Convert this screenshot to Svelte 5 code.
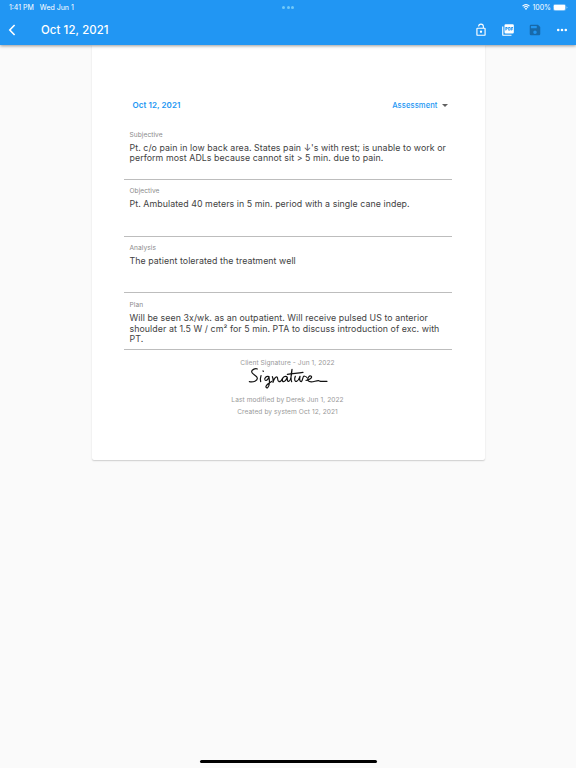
<script>
  const title = 'Oct 12, 2021';

  const fields = [
    {
      label: 'Subjective',
      lines: [
        "Pt. c/o pain in low back area. States pain ↓'s with rest; is unable to work or",
        'perform most ADLs because cannot sit > 5 min. due to pain.'
      ]
    },
    {
      label: 'Objective',
      lines: ['Pt. Ambulated 40 meters in 5 min. period with a single cane indep.']
    },
    {
      label: 'Analysis',
      lines: ['The patient tolerated the treatment well']
    },
    {
      label: 'Plan',
      lines: [
        'Will be seen 3x/wk. as an outpatient. Will receive pulsed US to anterior',
        'shoulder at 1.5 W / cm² for 5 min. PTA to discuss introduction of exc. with',
        'PT.'
      ]
    }
  ];
</script>

<div class="screen">
  <header class="app-bar">
    <div class="status">
      <span class="time">1:41 PM</span>
      <span>Wed Jun 1</span>
      <span class="multitask"><i></i><i></i><i></i></span>
      <svg class="wifi" width="8" height="6" viewBox="0 0 16 12" aria-hidden="true">
        <path d="M1 4.2Q8-1.8 15 4.2M3.6 7Q8 3.2 12.4 7" fill="none" stroke="currentColor" stroke-width="2.2" />
        <path d="M5.4 9Q8 6.8 10.6 9L8 12z" fill="currentColor" />
      </svg>
      <span class="percent">100%</span>
      <svg class="battery" width="15" height="7" viewBox="0 0 15 7" aria-hidden="true">
        <rect x=".25" y=".25" width="12.500" height="6.500" rx="1.9" fill="none" stroke="currentColor" stroke-width=".5" opacity=".5" />
        <rect x=".8" y=".8" width="11.4" height="5.4" rx="1.4" fill="currentColor" />
        <path d="M13.6 2.500v2q.9-.3.9-1t-.9-1z" fill="currentColor" opacity=".6" />
      </svg>
    </div>
    <div class="toolbar">
      <button class="back" aria-label="Back">
        <svg width="8" height="12" viewBox="0 0 8 12">
          <path d="M6.6 1 1.8 6l4.8 5" fill="none" stroke="currentColor" stroke-width="1.6" />
        </svg>
      </button>
      <h1>{title}</h1>
      <div class="actions">
        <button aria-label="Unlock">
          <svg width="14" height="14" viewBox="0 0 24 24" fill="currentColor">
            <path d="M12 17a2 2 0 1 0 0-4 2 2 0 0 0 0 4zm6-9h-1V6A5 5 0 0 0 7 6h1.9a3.1 3.1 0 0 1 6.2 0v2H6a2 2 0 0 0-2 2v10a2 2 0 0 0 2 2h12a2 2 0 0 0 2-2V10a2 2 0 0 0-2-2zm0 12H6V10h12z" />
          </svg>
        </button>
        <button aria-label="Export PDF">
          <svg width="14" height="14" viewBox="0 0 24 24" fill="currentColor">
            <path d="M20 2H8a2 2 0 0 0-2 2v12a2 2 0 0 0 2 2h12a2 2 0 0 0 2-2V4a2 2 0 0 0-2-2zm-8.500 7.500c0 .83-.67 1.500-1.500 1.500H9v2H7.500V7H10c.83 0 1.500.67 1.500 1.500zm5 2c0 .83-.67 1.500-1.500 1.500h-2.500V7H15c.83 0 1.500.67 1.500 1.500zm4-3H19v1h1.500V11H19v2h-1.500V7h3zM9 9.500h1v-1H9zM4 6H2v14a2 2 0 0 0 2 2h14v-2H4zm10 5.500h1v-3h-1z" />
          </svg>
        </button>
        <button class="disabled" aria-label="Save" disabled>
          <svg width="14" height="14" viewBox="0 0 24 24" fill="currentColor">
            <path d="M17 3H5a2 2 0 0 0-2 2v14a2 2 0 0 0 2 2h14a2 2 0 0 0 2-2V7zm-5 16a3 3 0 1 1 0-6 3 3 0 0 1 0 6zm3-10H5V5h10z" />
          </svg>
        </button>
        <button aria-label="More">
          <svg width="14" height="14" viewBox="0 0 24 24" fill="currentColor">
            <circle cx="5.500" cy="12" r="2.200" /><circle cx="12" cy="12" r="2.200" /><circle cx="18.500" cy="12" r="2.200" />
          </svg>
        </button>
      </div>
    </div>
  </header>

  <main class="note">
    <div class="note-head">
      <span class="date">{title}</span>
      <span class="type">Assessment</span>
      <svg width="6" height="3" viewBox="0 0 6 3" aria-hidden="true"><path d="M0 0h6L3 3z" fill="#616161" /></svg>
    </div>

    {#each fields as field (field.label)}
      <section class="field">
        <div class="label">{field.label}</div>
        {#each field.lines as line}
          <div class="line">{line}</div>
        {/each}
      </section>
    {/each}

    <footer>
      <div class="signed">Client Signature - Jun 1, 2022</div>
      <svg class="signature" width="82" height="24" viewBox="36 48 246 72" aria-label="Signature">
        <g fill="none" stroke="#111" stroke-width="3.6" stroke-linecap="round" stroke-linejoin="round">
          <path d="M67 57C60 54 49 60 50 66C51 73 66 77 67 84C68 92 55 98 43 95" />
          <path d="M78 77C76 83 76 90 77 95M84 63l1 1" />
          <path d="M102 80C94 77 87 84 90 90C94 95 100 86 102 81C104 94 106 105 98 113C94 115 91 111 94 107C98 101 106 98 110 94" />
          <path d="M112 80C115 85 115 91 114 97C117 87 122 79 126 81C130 84 126 94 132 95C136 95 140 91 142 86" />
          <path d="M155 80C146 76 139 87 143 94C150 97 155 87 157 82C156 90 158 96 162 94C168 91 170 75 171 58C168 74 167 88 170 95" />
          <path d="M157 73C172 70 187 70 204 67" />
          <path d="M181 79C177 88 179 96 185 94C191 92 193 84 195 79C193 88 194 95 199 95C204 90 203 79 207 78C211 79 215 80 216 83" />
          <path d="M213 91C222 91 233 83 229 79C223 75 216 84 219 92C227 101 242 91 251 92C259 96 267 94 276 94" />
        </g>
      </svg>
      <div>Last modified by Derek Jun 1, 2022</div>
      <div>Created by system Oct 12, 2021</div>
    </footer>
  </main>

  <div class="home-bar"></div>
</div>

<style>
  :global(body) {
    margin: 0;
    background: #fafafa;
  }

  .screen {
    display: flex;
    flex-direction: column;
    height: 768px;
    overflow: hidden;
    background: #fafafa;
    font-family: Inter, 'Liberation Sans', sans-serif;
  }

  .app-bar {
    position: relative;
    z-index: 1;
    flex: none;
    height: 45px;
    background: #2196f3;
    color: #fff;
    box-shadow: 0 1px 3px rgba(0, 0, 0, 0.4);
  }

  .status {
    position: relative;
    display: flex;
    align-items: center;
    box-sizing: border-box;
    height: 14px;
    padding: 0 8px 0 9px;
    font-size: 7px;
    line-height: 15px;
  }

  .time {
    margin-right: 6px;
  }

  .multitask {
    position: absolute;
    left: 282px;
    top: 6px;
    display: flex;
    gap: 1.5px;
  }

  .multitask i {
    width: 3px;
    height: 3px;
    border-radius: 50%;
    background: #72c9f8;
  }

  .wifi {
    margin-left: auto;
  }

  .percent {
    margin: 0 2px;
  }

  .toolbar {
    display: flex;
    align-items: center;
    height: 31px;
    padding: 0 7px 0 8px;
  }

  button {
    display: flex;
    padding: 0;
    border: none;
    background: none;
    color: inherit;
  }

  h1 {
    margin: 0 0 0 25px;
    font-size: 11.4px;
    font-weight: 500;
    letter-spacing: 0.1px;
  }

  .actions {
    display: flex;
    gap: 13px;
    margin-left: auto;
  }

  .disabled {
    color: #1769aa;
  }

  .note {
    box-sizing: border-box;
    width: 393px;
    height: 415px;
    margin: 0 auto;
    padding: 50px 33px 0 32px;
    border-radius: 0 0 2px 2px;
    background: #fff;
    box-shadow: 0 1px 1.5px rgba(0, 0, 0, 0.18);
  }

  .note-head {
    display: flex;
    align-items: center;
    height: 20px;
    margin-bottom: 8.4px;
    padding: 0 4px 0 9px;
    color: #2196f3;
    font-size: 7.6px;
    font-weight: 500;
    letter-spacing: 0.08px;
  }

  .date {
    font-size: 8px;
    font-weight: 600;
  }

  .type {
    margin-left: auto;
    margin-right: 4px;
  }

  .field {
    box-sizing: border-box;
    height: 56.7px;
    padding: 6.4px 0 0 6px;
    border-bottom: 1px solid #bdbdbd;
    color: #424242;
    font-size: 8.8px;
    line-height: 10.7px;
    letter-spacing: 0.07px;
    white-space: nowrap;
  }

  .label {
    margin-bottom: 3px;
    color: #8a8a8a;
    font-size: 6.6px;
    line-height: 10px;
    letter-spacing: 0.06px;
  }

  footer {
    display: flex;
    flex-direction: column;
    align-items: center;
    padding-top: 7px;
    color: #999;
    font-size: 6.6px;
    line-height: 12.3px;
    letter-spacing: 0.07px;
  }

  .signed {
    height: 9px;
  }

  .signature {
    margin-bottom: 4px;
  }

  .home-bar {
    width: 177px;
    height: 3px;
    margin: auto auto 5px;
    border-radius: 2px;
    background: #000;
  }
</style>
